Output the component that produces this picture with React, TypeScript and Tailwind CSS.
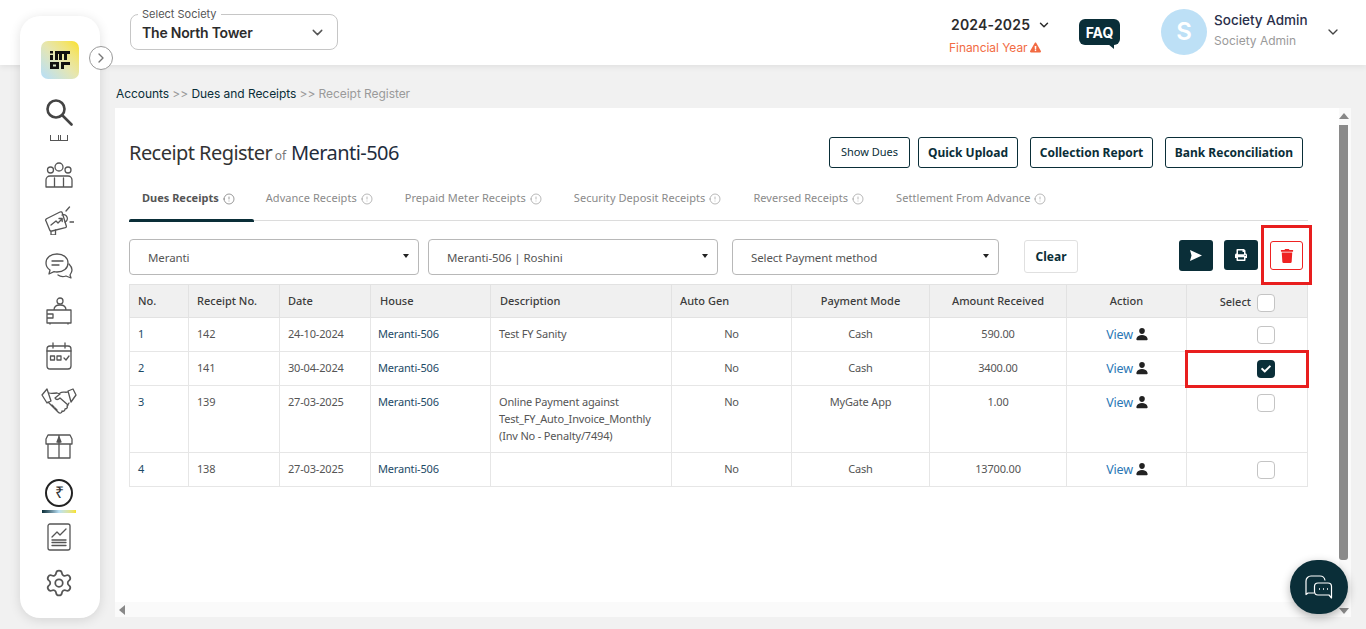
import React from "react";
import { ChevronDown, ChevronRight, Settings, Info } from "lucide-react";
import { FaCheck, FaExclamationTriangle, FaPrint, FaTrash } from "react-icons/fa";
import { IoPerson } from "react-icons/io5";

const rows = [
  { no: 1, receipt: 142, date: "24-10-2024", desc: ["Test FY Sanity"], mode: "Cash", amount: "590.00", h: "h-[34px]", checked: false },
  { no: 2, receipt: 141, date: "30-04-2024", desc: [], mode: "Cash", amount: "3400.00", h: "h-[34px]", checked: true },
  { no: 3, receipt: 139, date: "27-03-2025", desc: ["Online Payment against", "Test_FY_Auto_Invoice_Monthly", "(Inv No - Penalty/7494)"], mode: "MyGate App", amount: "1.00", h: "h-[67px]", checked: false },
  { no: 4, receipt: 138, date: "27-03-2025", desc: [], mode: "Cash", amount: "13700.00", h: "h-[34px]", checked: false },
];

const tabs = ["Dues Receipts", "Advance Receipts", "Prepaid Meter Receipts", "Security Deposit Receipts", "Reversed Receipts", "Settlement From Advance"];

const Logo = () => (
  <div className="flex h-[38px] w-[38px] items-center justify-center rounded-[7px] bg-gradient-to-tr from-[#b5defa] via-[#e6e6b0] to-[#fbe100]">
    <svg width="20" height="19" viewBox="0 0 20 19" fill="#111">
      <path d="M0 0h3v2.500H0zM0 4h3v5H0zM5 0h15v3h-3v6h-3V3h-2v6H9V3H8v6H5z" />
      <path d="M0 11h9v7H0zM3 13.500v2h3v-2zM11 11h9v3h-6v4h-3z" fillRule="evenodd" />
    </svg>
  </div>
);

const Icon = ({ children }: { children: React.ReactNode }) => (
  <svg width="30" height="30" viewBox="0 0 30 30" fill="none" stroke="#555" strokeWidth="1.3" strokeLinecap="round" strokeLinejoin="round">
    {children}
  </svg>
);

const Sidebar = () => (
  <aside className="absolute left-[20px] top-[16px] z-10 flex h-[602px] w-[80px] flex-col items-center rounded-[20px] bg-white shadow-[0_2px_12px_rgba(0,0,0,0.12)]">
    <div className="mt-[25px]">
      <Logo />
    </div>
    <svg className="mt-[20px] -translate-x-[1px]" width="27" height="27" viewBox="0 0 27 27" fill="none" stroke="#444" strokeWidth="2.600" strokeLinecap="round">
      <circle cx="10" cy="10" r="8.500" />
      <path d="M16.500 16.500l9 9" />
    </svg>
    <div className="mt-[9px] flex h-[6px] w-[18px] -translate-x-[1px] gap-[1px] border-b border-[#555]">
      <span className="flex-1 border-x border-[#555]" />
      <span className="flex-1 border-x border-[#555]" />
    </div>
    <div className="mt-[20px] -translate-x-[1px]">
      <Icon>
        <circle cx="15" cy="6" r="4" />
        <circle cx="6.500" cy="9" r="3" />
        <circle cx="24" cy="9" r="3" />
        <path d="M2 26v-7a4 4 0 0 1 4-4h18a4 4 0 0 1 4 4v7zM10.500 26v-9M19.500 26v-9" />
      </Icon>
    </div>
    <div className="mt-[14px] -translate-x-[1px]">
      <Icon>
        <path d="M2 16c-1-1 0-2 1-2.500L16 7c1-.5 2 0 2.300 1l4 13c.3 1-.3 1.500-1 1.700L8 26c-1 .3-2 0-2.300-1z" />
        <path d="M7 26v4h4.500v-5M18 10a3.500 3.500 0 0 1 3 7M22 6l3.500-4M26 17h4" />
        <path d="M7 20l5-4 2 2 4-4M15 13.500h3.200v3" />
      </Icon>
    </div>
    <div className="mt-[17px] -translate-x-[1px]">
      <Icon>
        <path d="M13 2c6.500 0 11 3.500 11 9s-4.500 9-11 9c-1 0-2-.1-3-.3L5 22l1-4C3.500 16.500 2 14 2 11c0-5.500 4.500-9 11-9z" />
        <path d="M8 9h11M8 13h7M25 12c2 2 3 4 3 6 0 2-1 3.500-2 5l1 3-5-2c-3 1-6 .5-8-1" />
      </Icon>
    </div>
    <div className="mt-[14px] -translate-x-[1px]">
      <Icon>
        <circle cx="16" cy="5" r="3" />
        <path d="M10 14c0-3 2-5 6-5s6 2 6 5M3 14h24v13H3zM3 18h6v4H3M6 27v1M24 27v1" />
      </Icon>
    </div>
    <div className="mt-[15px] -translate-x-[1px]">
      <Icon>
        <rect x="3" y="5" width="24" height="23" rx="3" />
        <path d="M3 10h24M9 2v5M21 2v5" />
        <rect x="6.500" y="15" width="4" height="4" />
        <rect x="13" y="15" width="4" height="4" />
        <path d="M20 17l2 2 3-4" />
      </Icon>
    </div>
    <div className="mt-[16px] -translate-x-[1px]">
      <svg width="36" height="28" viewBox="0 0 36 28" fill="none" stroke="#555" strokeWidth="1.3" strokeLinejoin="round" strokeLinecap="round">
        <path d="M1 8l5-6 4 12-4 2zM35 8l-3-6-5 2 3 11z" />
        <path d="M8 6c3 1 5 0 8 0l3 1-5 4c1 2 3 2 5 0l8 7M27 5c-3 1-5-1-8 1" />
        <path d="M7 15l10 10c2 2 4 1 4-1 2 1 3-1 3-2 2 0 3-2 2-3l2-3" />
        <path d="M11 18l2 2M14 21l2 2" />
      </svg>
    </div>
    <div className="mt-[17px] -translate-x-[1px]">
      <Icon>
        <path d="M2 7l2-4h22l2 4v5H2zM4 12v14h22V12M15 3v23" />
        <path d="M13 10l2-5 2 5z" fill="#555" />
      </Icon>
    </div>
    <div className="mt-[17px] flex h-[28px] w-[28px] -translate-x-[1px] items-center justify-center rounded-full border-2 border-[#222]">
      <span className="font-['Liberation_Sans',sans-serif] text-[16px] leading-none text-[#333]">₹</span>
    </div>
    <div className="mt-[3px] h-[3px] w-[34px] -translate-x-[1px] bg-gradient-to-r from-[#0a2e38] via-[#b9e0f5] to-[#f8e21a]" />
    <div className="mt-[9px] -translate-x-[1px]">
      <Icon>
        <rect x="4" y="2" width="22" height="26" rx="2" />
        <path d="M8 15l5-5 3 3 6-6M8 18h14M8 20.500h14M8 23.500h14" />
      </Icon>
    </div>
    <Settings className="mt-[16px] -translate-x-[1px] text-[#555]" size={30} strokeWidth={1.4} />
  </aside>
);

const Header = () => (
  <header className="flex h-[65px] items-start bg-white pl-[130px] shadow-[0_2px_6px_rgba(0,0,0,0.07)] font-['Inter',sans-serif]">
    <div className="relative mt-[14px] flex h-[36px] w-[208px] items-center justify-between rounded-[8px] border border-[#c6c6c6] pl-[11px] pr-[11px]">
      <span className="absolute -top-[7px] left-[7px] bg-white px-[4px] text-[11px] leading-[13px] text-[#555]">Select Society</span>
      <span className="text-[14px] font-semibold tracking-[-0.2px] text-[#2c2c2c]">The North Tower</span>
      <ChevronDown size={17} className="text-[#555]" />
    </div>
    <div className="ml-[613px] mt-[15px] flex w-[92px] flex-col items-start">
      <div className="flex items-center gap-[7px] whitespace-nowrap text-[14px] font-semibold leading-[20px] tracking-[0.2px] text-[#2b2b2b]">
        2024-2025
        <ChevronDown size={14} strokeWidth={2.5} />
      </div>
      <div className="mt-[5px] -ml-[2px] flex items-center gap-[2px] whitespace-nowrap text-[12px] leading-[15px] tracking-[-0.05px] text-[#f26b43]">
        Financial Year
        <FaExclamationTriangle size={11} />
      </div>
    </div>
    <div className="relative ml-[36px] mt-[19px] flex h-[26px] w-[41px] items-center justify-center rounded-[6px] bg-[#0a2e38] text-[14px] font-bold text-white">
      FAQ
      <span className="absolute -bottom-[4px] right-[6px] h-0 w-0 border-l-[6px] border-t-[5px] border-l-transparent border-t-[#0a2e38]" />
    </div>
    <div className="ml-[41px] mt-[9px] flex h-[46px] w-[46px] items-center justify-center rounded-full bg-[#bde0f6] text-[24px] font-semibold text-white">S</div>
    <div className="ml-[7px] mt-[12px] flex flex-col">
      <span className="text-[13.500px] font-medium leading-[17px] text-[#2a2f4a]">Society Admin</span>
      <span className="mt-[4px] text-[12px] leading-[16px] text-[#9a9a9a]">Society Admin</span>
    </div>
    <ChevronDown size={16} strokeWidth={2} className="ml-[17px] mt-[24px] text-[#444]" />
  </header>
);

const OutlineButton = ({ children, className }: { children: React.ReactNode; className: string }) => (
  <button className={`flex h-[31px] items-center justify-center rounded-[3px] border border-[#0a2e38] text-[#0a2e38] ${className}`}>{children}</button>
);

const SelectBox = ({ label, className }: { label: string; className: string }) => (
  <div className={`flex h-[36px] items-center justify-between rounded-[4px] border border-[#b8b8b8] pl-[18px] pr-[9px] text-[11.500px] tracking-[-0.1px] text-[#555] ${className}`}>
    <span className="pt-[2px]">{label}</span>
    <span className="mb-[3px] h-0 w-0 border-x-[3px] border-t-[4px] border-x-transparent border-t-[#222]" />
  </div>
);

const CheckBox = ({ checked }: { checked?: boolean }) =>
  checked ? (
    <span className="flex h-[18px] w-[18px] items-center justify-center rounded-[4px] bg-[#0a2e38]">
      <FaCheck size={10} color="white" />
    </span>
  ) : (
    <span className="block h-[18px] w-[18px] rounded-[4px] border border-[#c4c4c4] bg-white" />
  );

const ReceiptTable = () => (
  <table className="w-[1178px] table-fixed border-collapse text-[11px] tracking-[-0.17px] text-[#555]">
    <colgroup>
      <col className="w-[59px]" />
      <col className="w-[91px]" />
      <col className="w-[91px]" />
      <col className="w-[120px]" />
      <col className="w-[181px]" />
      <col className="w-[120px]" />
      <col className="w-[138px]" />
      <col className="w-[137px]" />
      <col className="w-[120px]" />
      <col className="w-[121px]" />
    </colgroup>
    <thead>
      <tr className="h-[33px] bg-[#f0f0f0] tracking-normal text-[#3c3c3c] [&>th]:border [&>th]:border-[#e2e2e2] [&>th]:font-medium">
        <th className="pl-[8px] text-left">No.</th>
        <th className="pl-[8px] text-left">Receipt No.</th>
        <th className="pl-[8px] text-left">Date</th>
        <th className="pl-[9px] text-left">House</th>
        <th className="pl-[9px] text-left">Description</th>
        <th className="pl-[8px] text-left">Auto Gen</th>
        <th>Payment Mode</th>
        <th>Amount Received</th>
        <th>Action</th>
        <th>
          <div className="flex items-center justify-end gap-[6px] pr-[32px] pt-[3px]">
            Select
            <span className="mt-[1px]">
              <CheckBox />
            </span>
          </div>
        </th>
      </tr>
    </thead>
    <tbody>
      {rows.map((r) => (
        <tr key={r.no} className={`${r.h} align-top [&>td]:border [&>td]:border-[#e6e6e6] [&>td]:pt-[7px] [&>td]:leading-[17px]`}>
          <td className="pl-[8px] text-[#1c4a66]">{r.no}</td>
          <td className="pl-[8px]">{r.receipt}</td>
          <td className="pl-[8px]">{r.date}</td>
          <td className="pl-[7px] text-[#1c4a66]">Meranti-506</td>
          <td className="pl-[8px]">
            {r.desc.map((d) => (
              <div key={d}>{d}</div>
            ))}
          </td>
          <td className="text-center">No</td>
          <td className="text-center">{r.mode}</td>
          <td className="text-center">{r.amount}</td>
          <td className="text-center">
            <span className="ml-[2px] mt-[1px] inline-flex items-center gap-[2px] text-[12.500px] text-[#2a77b5]">
              View
              <IoPerson size={14} color="#222" className="-mt-[2px]" />
            </span>
          </td>
          <td>
            <div className="mt-[1px] flex justify-end pr-[32px]">
              <CheckBox checked={r.checked} />
            </div>
          </td>
        </tr>
      ))}
    </tbody>
  </table>
);

const App = () => (
  <div className="relative h-[629px] w-[1366px] overflow-hidden bg-[#f1f1f1] font-['Noto_Sans',sans-serif]">
    <Header />
    <Sidebar />
    <button className="absolute left-[89px] top-[46px] z-20 flex h-[24px] w-[24px] items-center justify-center rounded-full border border-[#9a9a9a] bg-white text-[#777]">
      <ChevronRight size={16} />
    </button>
    <main className="ml-[115px] mr-[15px]">
      <div className="h-[43px] pl-[1px] pt-[21px] font-['Inter',sans-serif] text-[12px] leading-[16px] tracking-[-0.06px] text-[#9a9a9a]">
        <span className="text-[#0a2e38]">Accounts</span> &gt;&gt; <span className="text-[#0a2e38]">Dues and Receipts</span> &gt;&gt; Receipt Register
      </div>
      <section className="relative flex h-[509px] flex-col bg-white">
        <div className="flex h-[494px] flex-1">
          <div className="flex-1 pl-[14px]">
            <div className="flex h-[60px] items-end justify-between pr-[36px]">
              <h1 className="-mb-[2px] text-[20px] font-normal leading-[28px] tracking-[-0.55px] text-[#333]">
                Receipt Register <span className="-ml-[2px] text-[12px] tracking-normal text-[#777]">of</span> <span className="text-[#1f2d3d]">Meranti-506</span>
              </h1>
              <div className="flex font-bold">
                <OutlineButton className="w-[81px] text-[11px] font-normal">Show Dues</OutlineButton>
                <OutlineButton className="ml-[8px] w-[100px] text-[12px]">Quick Upload</OutlineButton>
                <OutlineButton className="ml-[12px] w-[123px] text-[12px]">Collection Report</OutlineButton>
                <OutlineButton className="ml-[12px] w-[138px] text-[12px]">Bank Reconciliation</OutlineButton>
              </div>
            </div>
            <div className="mt-[18px] flex h-[35px] w-[1179px] border-b border-[#dcdcdc] text-[11px] text-[#8a8a8a]">
              {tabs.map((t, i) => (
                <div key={t} className={`relative flex h-[35px] items-start gap-[4px] pt-[4px] ${i === 0 ? "mr-[12px] pl-[13px] pr-[19px] font-bold text-[#555]" : "mr-[26px] pr-[6px] tracking-[0.06px]"}`}>
                  <span className="leading-[16px]">{t}</span>
                  <Info size={12} strokeWidth={1.2} className="mt-[3px] rotate-180" />
                  {i === 0 && <span className="absolute bottom-[-1px] left-0 h-[3px] w-full rounded-t-[2px] bg-[#0a2e38]" />}
                </div>
              ))}
            </div>
            <div className="mt-[18px] flex h-[36px] w-[1179px] items-start">
              <SelectBox label="Meranti" className="w-[290px]" />
              <SelectBox label="Meranti-506 | Roshini" className="ml-[9px] w-[290px]" />
              <SelectBox label="Select Payment method" className="ml-[14px] w-[267px]" />
              <button className="ml-[25px] mt-[1px] h-[33px] w-[54px] rounded-[3px] border border-[#e0e0e0] text-[12px] font-bold text-[#0a2e38]">Clear</button>
              <div className="ml-auto mr-[5px] flex items-start">
                <button className="mt-[1px] flex h-[31px] w-[34px] items-center justify-center rounded-[3px] bg-[#0a2e38]">
                  <svg width="12" height="11" viewBox="0 0 12 11" fill="white">
                    <path d="M0 0l12 5.500L0 11l1.500-5.500z" />
                  </svg>
                </button>
                <button className="ml-[11px] mt-[1px] flex h-[30px] w-[34px] items-center justify-center rounded-[3px] bg-[#0a2e38]">
                  <FaPrint size={12} color="white" />
                </button>
                <button className="ml-[12px] mt-[2px] flex h-[29px] w-[33px] items-center justify-center rounded-[3px] border border-[#ee2222]">
                  <FaTrash size={14} color="#ee2222" />
                </button>
              </div>
            </div>
            <div className="mt-[9px]">
              <ReceiptTable />
            </div>
          </div>
          <div className="relative w-[12px] bg-[#fafafa]">
            <span className="absolute left-0 top-[5px] h-0 w-0 border-x-[5px] border-b-[6px] border-x-transparent border-b-[#888]" />
            <div className="absolute left-0 top-[17px] h-[435px] w-[9px] rounded-b-[3px] bg-[#8a8a8a]" />
          </div>
        </div>
        <div className="flex h-[15px] items-center bg-[#fafafa] pl-[4px]">
          <span className="h-0 w-0 border-y-[5px] border-r-[6px] border-y-transparent border-r-[#888]" />
        </div>
        <span className="absolute bottom-[3px] right-[2px] h-0 w-0 border-x-[5px] border-t-[6px] border-x-transparent border-t-[#888]" />
      </section>
    </main>
    {/* annotation boxes drawn over the page */}
    <div className="absolute left-[1261px] top-[225px] h-[60px] w-[51px] border-[3px] border-[#e81e1e]" />
    <div className="absolute left-[1185px] top-[350px] h-[38px] w-[124px] border-[3px] border-[#e81e1e]" />
    <button className="absolute left-[1290px] top-[560px] flex h-[54px] w-[58px] items-center justify-center rounded-full bg-[#0a2e38] shadow-[0_3px_10px_rgba(0,0,0,0.3)]">
      <svg width="28" height="26" viewBox="0 0 28 26" fill="none" stroke="white" strokeWidth="1.2" strokeLinejoin="round">
        <path d="M9 19H3l-2 1.500V7a5 5 0 0 1 5-5h9a5 5 0 0 1 5 4.500" />
        <path d="M13 9h10a3.500 3.500 0 0 1 3.500 3.500V24L24 21H13a3.500 3.500 0 0 1-3.500-3.500v-5A3.500 3.500 0 0 1 13 9z" fill="#0a2e38" />
        <path d="M14 15h1M18 15h1M22 15h1" strokeWidth="1.6" />
      </svg>
    </button>
  </div>
);

export default App;
